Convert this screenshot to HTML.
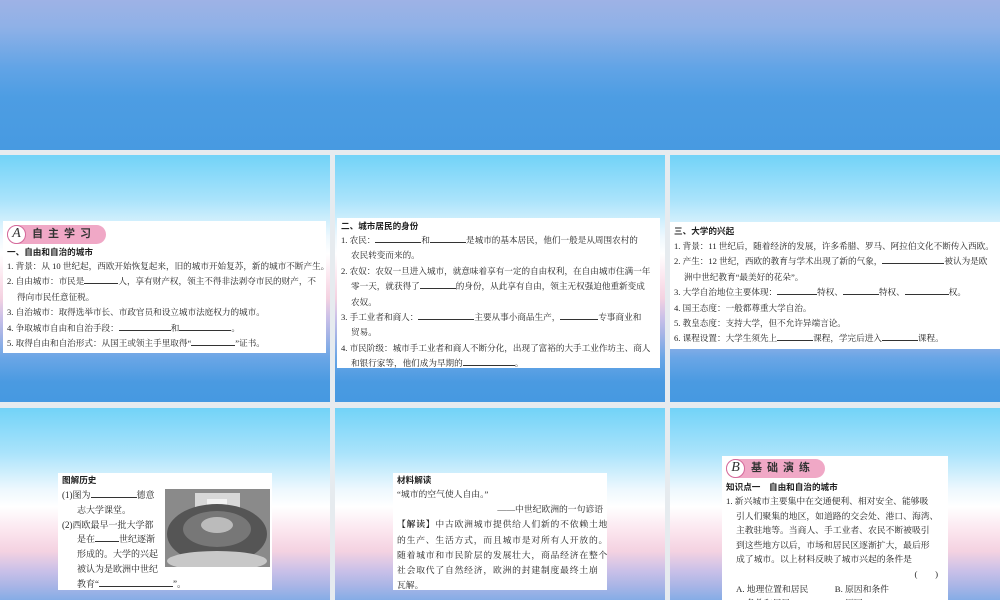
<!DOCTYPE html>
<html><head><meta charset="utf-8">
<style>
*{margin:0;padding:0;box-sizing:border-box}
html,body{width:1000px;height:600px;overflow:hidden}
body{background:#e6ebef;position:relative;font-family:"Liberation Serif","Noto Serif CJK SC",serif;color:#222}
.top{position:absolute;left:0;top:0;width:1000px;height:150px;background:linear-gradient(#9eb2e6 0%,#8fb1e7 18%,#62a4e6 45%,#4d9de3 65%,#479ae1 100%)}
.s{position:absolute;height:247px;background:linear-gradient(#72d3f8 0%,#a9e3fb 18%,#eef8fe 33%,#ffffff 40%,#fbe5ee 50%,#f4d2e1 58%,#c9c0e8 66%,#a9b5e6 72%,#6aa6e6 82%,#4a9ae1 92%,#4699e1 100%);background-size:100% 247px;background-repeat:no-repeat}
.r3{height:192px}
.box{position:absolute;background:#fff;font-size:8.6px;line-height:15.4px;padding:0 4px;white-space:nowrap;overflow:hidden}
.b{font-family:"Liberation Sans","Noto Sans CJK SC",sans-serif;font-weight:bold;font-size:8.6px}
.u{display:inline-block;border-bottom:1px solid #333;height:8px;vertical-align:baseline}
.in{padding-left:10px}
.badge{display:inline-flex;align-items:center;height:19px;border-radius:10px;background:#f0a8c6;padding-right:10px;margin:4px 0 2px 0}
.badge .c{width:19px;height:19px;border-radius:50%;border:1.5px solid #d4699a;background:#fff;font-family:"Liberation Serif",serif;font-style:italic;font-size:14px;line-height:16px;text-align:center;color:#333}
.badge .t{font-family:"Liberation Sans","Noto Sans CJK SC",sans-serif;font-weight:bold;font-size:11px;letter-spacing:5px;margin-left:6px;color:#333}
</style></head><body>
<div class="top"></div>
<div class="s" style="left:0;top:155px;width:330px"></div>
<div class="s" style="left:335px;top:155px;width:330px"></div>
<div class="s" style="left:670px;top:155px;width:330px"></div>
<div class="s r3" style="left:0;top:408px;width:330px"></div>
<div class="s r3" style="left:335px;top:408px;width:330px"></div>
<div class="s r3" style="left:670px;top:408px;width:330px"></div>

<div class="box" style="left:3px;top:221px;width:323px;height:132px">
<div class="badge"><span class="c">A</span><span class="t">自主学习</span></div>
<div class="b" style="line-height:13px">一、自由和自治的城市</div>
<div>1. 背景：从 10 世纪起，西欧开始恢复起来，旧的城市开始复苏，新的城市不断产生。</div>
<div>2. 自由城市：市民是<span class="u" style="width:34px"></span>人，享有财产权，领主不得非法剥夺市民的财产，不</div>
<div class="in">得向市民任意征税。</div>
<div>3. 自治城市：取得选举市长、市政官员和设立城市法庭权力的城市。</div>
<div>4. 争取城市自由和自治手段：<span class="u" style="width:52px"></span>和<span class="u" style="width:52px"></span>。</div>
<div>5. 取得自由和自治形式：从国王或领主手里取得“<span class="u" style="width:44px"></span>”证书。</div>
</div>

<div class="box" style="left:337px;top:218px;width:323px;height:150px;padding-top:1px">
<div class="b" style="line-height:14px">二、城市居民的身份</div>
<div>1. 农民：<span class="u" style="width:46px"></span>和<span class="u" style="width:36px"></span>是城市的基本居民，他们一般是从周围农村的</div>
<div class="in">农民转变而来的。</div>
<div>2. 农奴：农奴一旦进入城市，就意味着享有一定的自由权利，在自由城市住满一年</div>
<div class="in">零一天，就获得了<span class="u" style="width:36px"></span>的身份，从此享有自由，领主无权强迫他重新变成</div>
<div class="in">农奴。</div>
<div>3. 手工业者和商人：<span class="u" style="width:56px"></span>主要从事小商品生产，<span class="u" style="width:38px"></span>专事商业和</div>
<div class="in">贸易。</div>
<div>4. 市民阶级：城市手工业者和商人不断分化，出现了富裕的大手工业作坊主、商人</div>
<div class="in">和银行家等，他们成为早期的<span class="u" style="width:52px"></span>。</div>
</div>

<div class="box" style="left:670px;top:222px;width:330px;height:127px;padding-top:2px">
<div class="b" style="line-height:15px">三、大学的兴起</div>
<div>1. 背景：11 世纪后，随着经济的发展，许多希腊、罗马、阿拉伯文化不断传入西欧。</div>
<div>2. 产生：12 世纪，西欧的教育与学术出现了新的气象，<span class="u" style="width:62px"></span>被认为是欧</div>
<div class="in">洲中世纪教育“最美好的花朵”。</div>
<div>3. 大学自治地位主要体现：<span class="u" style="width:40px"></span>特权、<span class="u" style="width:36px"></span>特权、<span class="u" style="width:44px"></span>权。</div>
<div>4. 国王态度：一般都尊重大学自治。</div>
<div>5. 教皇态度：支持大学，但不允许异端言论。</div>
<div>6. 课程设置：大学生须先上<span class="u" style="width:36px"></span>课程，学完后进入<span class="u" style="width:36px"></span>课程。</div>
</div>

<div class="box" style="left:58px;top:473px;width:214px;height:117px;line-height:14.8px;font-size:9px">
<div class="b" style="line-height:15px">图解历史</div>
<div>(1)图为<span class="u" style="width:46px"></span>德意</div>
<div style="padding-left:15px">志大学课堂。</div>
<div>(2)西欧最早一批大学都</div>
<div style="padding-left:15px">是在<span class="u" style="width:24px"></span>世纪逐渐</div>
<div style="padding-left:15px">形成的。大学的兴起</div>
<div style="padding-left:15px">被认为是欧洲中世纪</div>
<div style="padding-left:15px">教育“<span class="u" style="width:74px"></span>”。</div>
<svg style="position:absolute;left:107px;top:16px" width="105" height="78" viewBox="0 0 105 78">
<rect width="105" height="78" fill="#8a8a8a"/>
<rect x="30" y="4" width="45" height="18" fill="#d8d8d8"/>
<rect x="42" y="10" width="20" height="10" fill="#f2f2f2"/>
<ellipse cx="52" cy="45" rx="50" ry="30" fill="#555"/>
<ellipse cx="52" cy="40" rx="34" ry="18" fill="#777"/>
<ellipse cx="52" cy="36" rx="16" ry="8" fill="#bbb"/>
<ellipse cx="52" cy="72" rx="50" ry="10" fill="#c8c8c8"/>
</svg>
</div>

<div class="box" style="left:393px;top:473px;width:214px;height:117px;line-height:15.2px;font-size:8.8px">
<div class="b" style="line-height:14px">材料解读</div>
<div>“城市的空气使人自由。”</div>
<div style="text-align:right">——中世纪欧洲的一句谚语</div>
<div style="letter-spacing:0.8px"><b>【解读】</b>中古欧洲城市提供给人们新的不依赖土地</div>
<div style="letter-spacing:0.8px">的生产、生活方式，而且城市是对所有人开放的。</div>
<div style="letter-spacing:0.8px">随着城市和市民阶层的发展壮大，商品经济在整个</div>
<div style="letter-spacing:0.8px">社会取代了自然经济，欧洲的封建制度最终土崩</div>
<div>瓦解。</div>
</div>

<div class="box" style="left:722px;top:456px;width:226px;height:144px;line-height:14.6px;font-size:8.8px">
<div class="badge" style="margin-top:3px"><span class="c">B</span><span class="t">基础演练</span></div>
<div class="b" style="line-height:14px">知识点一　自由和自治的城市</div>
<div>1. 新兴城市主要集中在交通便利、相对安全、能够吸</div>
<div class="in">引人们聚集的地区，如道路的交会处、港口、海湾、</div>
<div class="in">主教驻地等。当商人、手工业者、农民不断被吸引</div>
<div class="in">到这些地方以后，市场和居民区逐渐扩大，最后形</div>
<div class="in">成了城市。以上材料反映了城市兴起的条件是</div>
<div style="text-align:right;padding-right:6px">(　　)</div>
<div class="in">A. 地理位置和居民　　　B. 原因和条件</div>
<div class="in">C. 条件和居民　　　　　D. 原因</div>
</div>
</body></html>
